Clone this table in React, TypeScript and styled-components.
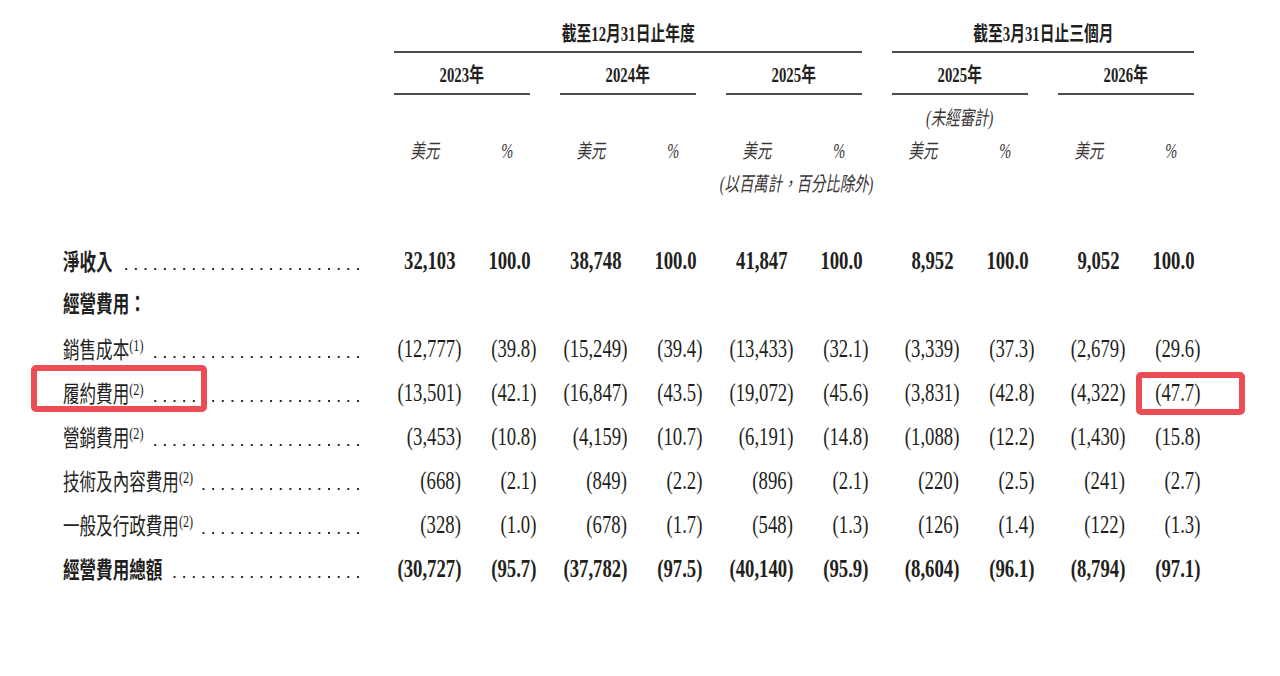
import React from 'react';
import styled, { createGlobalStyle, css } from 'styled-components';

type Pair = [string, string];

type Line = {
  label: string;
  note?: string;
  bold?: boolean;
  heading?: boolean;
  values?: Pair[];
};

const lines: Line[] = [
  {
    label: '淨收入',
    bold: true,
    values: [
      ['32,103', '100.0'],
      ['38,748', '100.0'],
      ['41,847', '100.0'],
      ['8,952', '100.0'],
      ['9,052', '100.0'],
    ],
  },
  { label: '經營費用：', bold: true, heading: true },
  {
    label: '銷售成本',
    note: '(1)',
    values: [
      ['(12,777)', '(39.8)'],
      ['(15,249)', '(39.4)'],
      ['(13,433)', '(32.1)'],
      ['(3,339)', '(37.3)'],
      ['(2,679)', '(29.6)'],
    ],
  },
  {
    label: '履約費用',
    note: '(2)',
    values: [
      ['(13,501)', '(42.1)'],
      ['(16,847)', '(43.5)'],
      ['(19,072)', '(45.6)'],
      ['(3,831)', '(42.8)'],
      ['(4,322)', '(47.7)'],
    ],
  },
  {
    label: '營銷費用',
    note: '(2)',
    values: [
      ['(3,453)', '(10.8)'],
      ['(4,159)', '(10.7)'],
      ['(6,191)', '(14.8)'],
      ['(1,088)', '(12.2)'],
      ['(1,430)', '(15.8)'],
    ],
  },
  {
    label: '技術及內容費用',
    note: '(2)',
    values: [
      ['(668)', '(2.1)'],
      ['(849)', '(2.2)'],
      ['(896)', '(2.1)'],
      ['(220)', '(2.5)'],
      ['(241)', '(2.7)'],
    ],
  },
  {
    label: '一般及行政費用',
    note: '(2)',
    values: [
      ['(328)', '(1.0)'],
      ['(678)', '(1.7)'],
      ['(548)', '(1.3)'],
      ['(126)', '(1.4)'],
      ['(122)', '(1.3)'],
    ],
  },
  {
    label: '經營費用總額',
    bold: true,
    values: [
      ['(30,727)', '(95.7)'],
      ['(37,782)', '(97.5)'],
      ['(40,140)', '(95.9)'],
      ['(8,604)', '(96.1)'],
      ['(8,794)', '(97.1)'],
    ],
  },
];

const years = ['2023年', '2024年', '2025年', '2025年', '2026年'];

// the printed table is a condensed face, so every text run is squeezed
const squeeze = 0.72;

const App = () => {
  const renderNumber = (v: string) =>
    v.endsWith(')') ? (
      <>
        {v.slice(0, -1)}
        <Hang>)</Hang>
      </>
    ) : (
      v
    );

  return (
    <>
      <GlobalStyle />
      <Page>
        <Row>
          <Spacer />
          <PeriodHead $w={468}>
            <HeadText>截至12月31日止年度</HeadText>
          </PeriodHead>
          <PeriodHead $w={302}>
            <HeadText>截至3月31日止三個月</HeadText>
          </PeriodHead>
        </Row>

        <Row>
          <Spacer />
          {years.map((y, i) => (
            <YearHead key={i}>
              <HeadText>{y}</HeadText>
            </YearHead>
          ))}
        </Row>

        <Row $h={24} $mt={11}>
          <Spacer />
          {years.map((_, i) => (
            <Group key={i} $center>
              {i === 3 && <NoteText>(未經審計)</NoteText>}
            </Group>
          ))}
        </Row>

        <Row $h={24} $mt={9}>
          <Spacer />
          {years.map((_, i) => (
            <Group key={i}>
              <UnitCell $w={61}>
                <NoteText>美元</NoteText>
              </UnitCell>
              <UnitCell $w={75} $pad={30}>
                <NoteText>%</NoteText>
              </UnitCell>
            </Group>
          ))}
        </Row>

        <Row $h={24} $mt={9}>
          <Spacer />
          {years.map((_, i) => (
            <Group key={i} $end>
              {i === 2 && (
                <Overhang>
                  <NoteText $origin='right'>(以百萬計，百分比除外)</NoteText>
                </Overhang>
              )}
            </Group>
          ))}
        </Row>

        <Body>
          {lines.map((line, i) => (
            <Row key={i} $lift={line.heading ? 4 : 0}>
              <LabelCell $dots={!line.heading}>
                <LabelText $bold={line.bold}>
                  {line.label}
                  {line.note && <Note>{line.note}</Note>}
                </LabelText>
              </LabelCell>
              {line.values &&
                line.values.map(([amount, pct], j) => (
                  <Group key={j}>
                    <NumCell $w={61} $bold={line.bold}>
                      <NumText>{renderNumber(amount)}</NumText>
                    </NumCell>
                    <NumCell $w={75} $bold={line.bold}>
                      <NumText>{renderNumber(pct)}</NumText>
                    </NumCell>
                  </Group>
                ))}
            </Row>
          ))}
        </Body>

        <Highlight $x={31} $y={365} $w={176} $h={47} />
        <Highlight $x={1136} $y={372} $w={109} $h={43} />
      </Page>
    </>
  );
};
export default App;

const GlobalStyle = createGlobalStyle`
  html, body {
    margin: 0;
    padding: 0;
    background: #ffffff;
  }

  body {
    font-family: "Liberation Serif", "Noto Sans CJK TC", serif;
    color: #231f20;
    overflow: hidden;
  }
`;

export const Page = styled.div`
  position: relative;
  box-sizing: border-box;
  width: 1280px;
  height: 676px;
  padding-left: 63px;
  overflow: hidden;
  background: #ffffff;
`;

export const Row = styled.div<{ $h?: number; $mt?: number; $lift?: number }>`
  display: flex;
  gap: 30px;
  height: ${(p) => (p.$h ? `${p.$h}px` : 'auto')};
  margin-top: ${(p) => p.$mt ?? 0}px;
  padding-bottom: ${(p) => p.$lift ?? 0}px;
  box-sizing: border-box;
`;

export const Body = styled.div`
  margin-top: 43px;

  ${Row} {
    height: 44px;
    align-items: center;
  }
`;

export const Spacer = styled.div`
  width: 301px;
  flex: none;
`;

const Squeezed = css<{ $origin?: string }>`
  display: inline-block;
  white-space: nowrap;
  transform: scaleX(${squeeze});
  transform-origin: ${(p) => p.$origin ?? 'center'} center;
`;

export const PeriodHead = styled.div<{ $w: number }>`
  box-sizing: border-box;
  width: ${(p) => p.$w}px;
  height: 53px;
  flex: none;
  display: flex;
  justify-content: center;
  padding-top: 22px;
  border-bottom: 2px solid #4d4d4d;
`;

export const YearHead = styled.div`
  box-sizing: border-box;
  width: 136px;
  height: 42px;
  flex: none;
  display: flex;
  justify-content: center;
  padding-top: 10px;
  border-bottom: 2px solid #4d4d4d;
`;

export const HeadText = styled.span<{ $origin?: string }>`
  ${Squeezed};
  font-family: "Liberation Serif", "Noto Sans CJK TC", serif;
  font-size: 20.5px;
  font-weight: 700;
  line-height: 24px;
`;

export const NoteText = styled.span<{ $origin?: string }>`
  ${Squeezed};
  font-family: "Liberation Serif", "Noto Sans CJK TC", serif;
  font-size: 20px;
  font-weight: 400;
  font-style: italic;
  line-height: 24px;
  color: #3a3536;
`;

export const Group = styled.div<{ $center?: boolean; $end?: boolean }>`
  width: 136px;
  flex: none;
  display: flex;
  justify-content: ${(p) => (p.$center ? 'center' : p.$end ? 'flex-end' : 'flex-start')};
`;

export const UnitCell = styled.div<{ $w: number; $pad?: number }>`
  box-sizing: border-box;
  width: ${(p) => p.$w}px;
  padding-left: ${(p) => p.$pad ?? 0}px;
  flex: none;
  display: flex;
  justify-content: center;
`;

export const Overhang = styled.div`
  display: flex;
  justify-content: flex-end;
  margin-right: -11px;
`;

export const LabelCell = styled.div<{ $dots?: boolean }>`
  width: 301px;
  height: 100%;
  flex: none;
  display: flex;
  align-items: center;

  ${(p) =>
    p.$dots &&
    css`
      background-image: radial-gradient(circle at center, #2a2627 0, #2a2627 1px, transparent 1.5px);
      background-size: 9.67px 4px;
      background-repeat: repeat-x;
      background-position: right 1.2px top 28px;
    `}
`;

export const LabelText = styled.span<{ $bold?: boolean }>`
  display: inline-block;
  white-space: nowrap;
  font-family: "Noto Sans CJK TC", sans-serif;
  font-size: 23px;
  font-weight: ${(p) => (p.$bold ? 700 : 400)};
  line-height: 1.2;
  padding-right: 8px;
  background: #ffffff;
  transform: scaleX(${squeeze});
  transform-origin: left center;
`;

export const Note = styled.sup`
  font-family: "Liberation Serif", serif;
  font-size: 17px;
  font-weight: 400;
  line-height: 0;
  vertical-align: 0.4em;
`;

export const NumCell = styled.div<{ $w: number; $bold?: boolean }>`
  width: ${(p) => p.$w}px;
  flex: none;
  display: flex;
  justify-content: flex-end;
  align-items: center;
  font-family: "Liberation Serif", serif;
  font-size: 26px;
  line-height: 1;
  font-weight: ${(p) => (p.$bold ? 700 : 400)};
`;

export const NumText = styled.span`
  display: inline-block;
  white-space: nowrap;
  transform: scaleX(${squeeze});
  transform-origin: right center;
`;

export const Hang = styled.span`
  margin-right: -0.333em;
`;

export const Highlight = styled.div<{ $x: number; $y: number; $w: number; $h: number }>`
  position: absolute;
  left: ${(p) => p.$x}px;
  top: ${(p) => p.$y}px;
  width: ${(p) => p.$w}px;
  height: ${(p) => p.$h}px;
  box-sizing: border-box;
  border: 6px solid #ec4d54;
  border-radius: 5px;
  pointer-events: none;
`;
